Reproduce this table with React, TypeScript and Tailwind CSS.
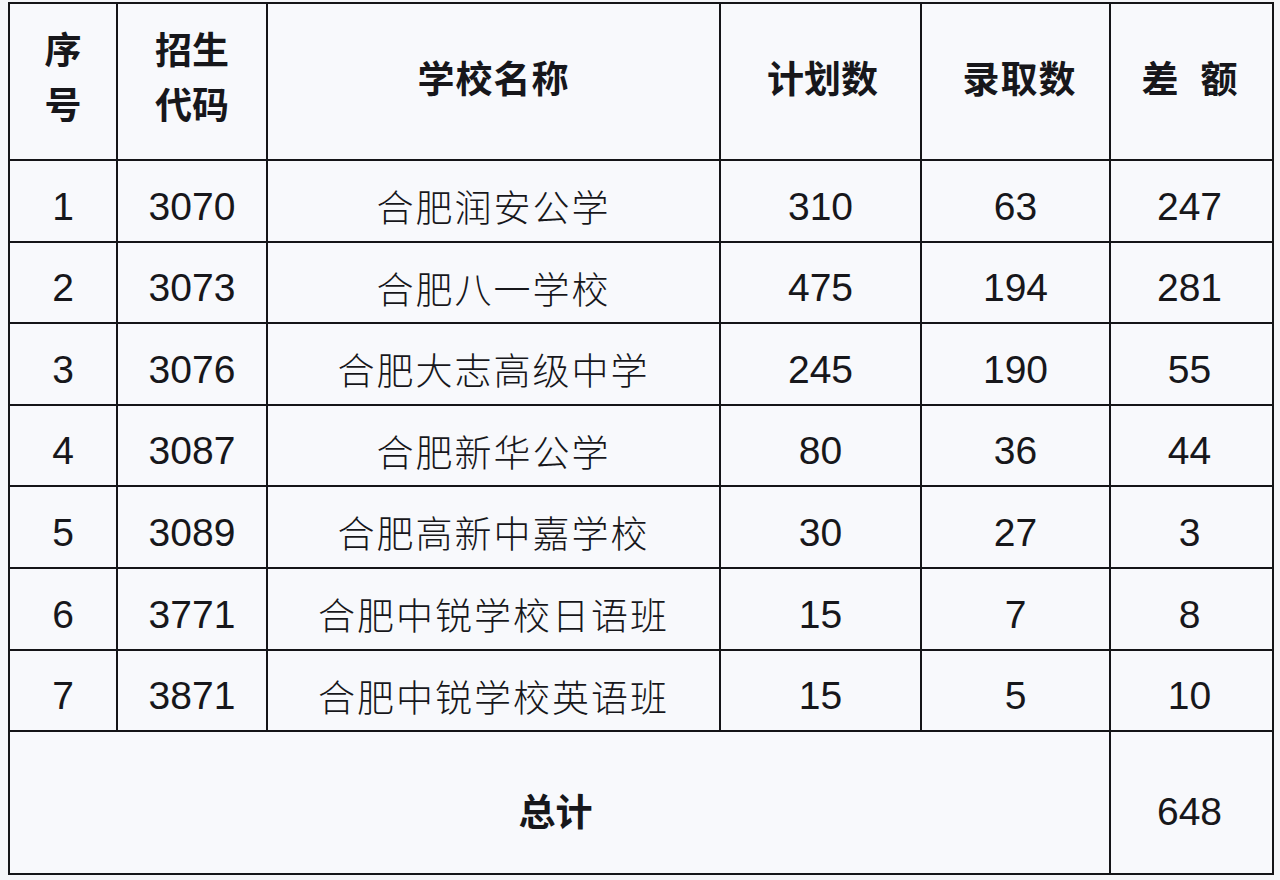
const rows = [
  { no: "1", code: "3070", name: "合肥润安公学", plan: "310", admit: "63", diff: "247" },
  { no: "2", code: "3073", name: "合肥八一学校", plan: "475", admit: "194", diff: "281" },
  { no: "3", code: "3076", name: "合肥大志高级中学", plan: "245", admit: "190", diff: "55" },
  { no: "4", code: "3087", name: "合肥新华公学", plan: "80", admit: "36", diff: "44" },
  { no: "5", code: "3089", name: "合肥高新中嘉学校", plan: "30", admit: "27", diff: "3" },
  { no: "6", code: "3771", name: "合肥中锐学校日语班", plan: "15", admit: "7", diff: "8" },
  { no: "7", code: "3871", name: "合肥中锐学校英语班", plan: "15", admit: "5", diff: "10" },
]

const cjk = "font-['Noto_Sans_CJK_SC',sans-serif]"
const num = "font-['Liberation_Sans',Arial,sans-serif]"
const cell = "border-2 border-[#151518] text-center align-middle"

export default function App() {
  return (
    <div className="min-h-[880px] w-[1280px] bg-[#f5f6f9] pl-[8px] pt-[2px] text-[#17171b]">
      <table className="w-[1264px] table-fixed border-collapse bg-[#f8f9fc]">
        <colgroup>
          <col className="w-[108px]" />
          <col className="w-[150px]" />
          <col className="w-[453px]" />
          <col className="w-[201px]" />
          <col className="w-[189px]" />
          <col className="w-[163px]" />
        </colgroup>
        <thead>
          <tr className={`h-[157px] ${cjk} text-[37px] font-bold`}>
            <th className={`${cell} leading-[55px] pb-3`}>
              序<br />号
            </th>
            <th className={`${cell} leading-[55px] pb-3`}>
              招生<br />代码
            </th>
            <th className={`${cell} pb-2 tracking-[1px]`}>学校名称</th>
            <th className={`${cell} pb-2 pl-1`}>计划数</th>
            <th className={`${cell} pb-2 pl-2 tracking-[1px]`}>录取数</th>
            <th className={`${cell} pb-2 pr-1`}>
              <span>差</span>
              <span className="ml-[22px]">额</span>
            </th>
          </tr>
        </thead>
        <tbody>
          {rows.map((r) => (
            <tr key={r.no} className="h-[81.6px]">
              <td className={`${cell} ${num} pt-3 text-[39px]`}>{r.no}</td>
              <td className={`${cell} ${num} pt-3 text-[39px]`}>{r.code}</td>
              <td className={`${cell} ${cjk} pt-3 text-[37px] font-light tracking-[2px]`}>{r.name}</td>
              <td className={`${cell} ${num} pt-3 text-[39px]`}>{r.plan}</td>
              <td className={`${cell} ${num} pt-3 text-[39px]`}>{r.admit}</td>
              <td className={`${cell} ${num} pt-3 pr-1 text-[39px]`}>{r.diff}</td>
            </tr>
          ))}
          <tr className="h-[143px]">
            <td colSpan={5} className={`${cell} ${cjk} pt-4 pr-2 text-[37px] font-bold`}>
              总计
            </td>
            <td className={`${cell} ${num} pt-5 pr-1 text-[39px]`}>648</td>
          </tr>
        </tbody>
      </table>
    </div>
  )
}
